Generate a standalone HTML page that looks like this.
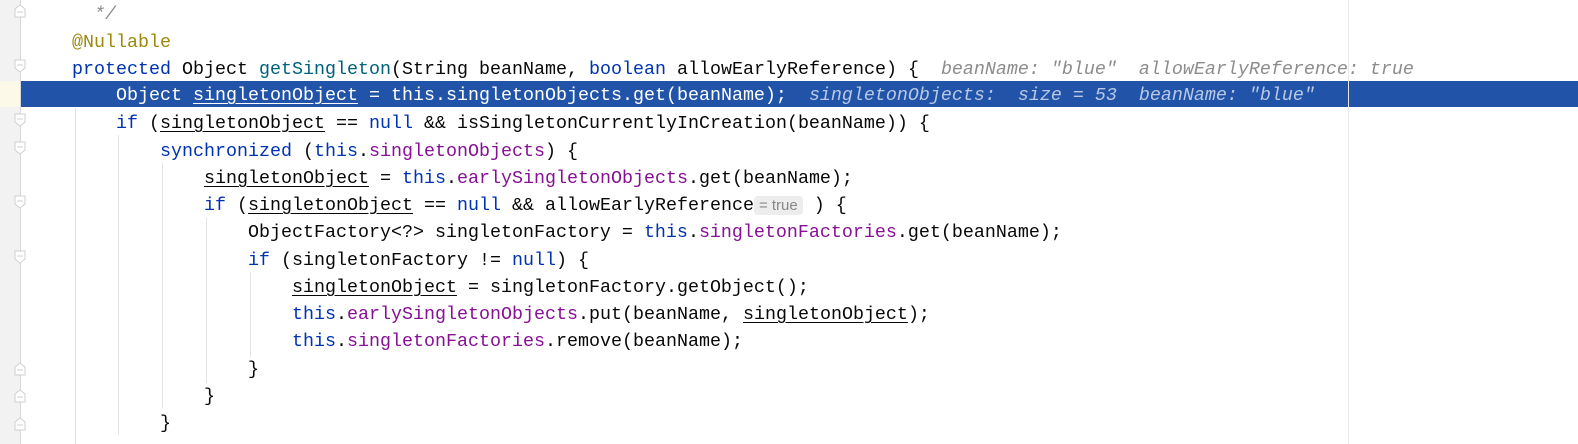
<!DOCTYPE html>
<html><head><meta charset="utf-8"><style>
body{margin:0;width:1578px;height:444px;overflow:hidden;background:#fff;position:relative;font-family:"Liberation Mono",monospace;font-size:18.33px;}
.gut{position:absolute;left:0;top:0;width:20px;height:444px;background:#f2f2f2;}
.gl{position:absolute;left:20px;top:0;width:1px;height:444px;background:#d8d8d8;}
.hl{position:absolute;left:21px;top:81px;width:1557px;height:26px;background:#2154a8;}
.hg{position:absolute;left:0;top:81px;width:20px;height:26px;background:#fdf9e8;}
.mr{position:absolute;left:1348px;top:0;width:1px;height:444px;background:#e8e8e8;}
.ig{position:absolute;width:1px;background:#e4e4e4;}
.ln{position:absolute;left:72px;height:27px;line-height:27px;white-space:pre;color:#080808;}
.k{color:#0033b3}.m{color:#00627a}.f{color:#871094}.a{color:#9e880d}.c{color:#8c8c8c;font-style:italic}
.u{text-decoration:underline;text-underline-offset:3px}
.h{color:#8c8c8c;font-style:italic}
.w,.w span{color:#fff}.w .h{color:#b8c8e6}
.ih{font-family:"Liberation Sans",sans-serif;font-size:15px;color:#888;background:#ededed;border-radius:4px;padding:1px 5px;font-style:normal}
svg{position:absolute;left:0;top:0}
</style></head><body>
<div class="gut"></div><div class="gl"></div>
<div class="hg"></div><div class="hl"></div>
<div class="mr"></div>
<div class="ig" style="left:75px;top:108px;height:336px"></div>
<div class="ig" style="left:118px;top:135px;height:300px"></div>
<div class="ig" style="left:162px;top:163px;height:245px"></div>
<div class="ig" style="left:206px;top:218px;height:165px"></div>
<div class="ig" style="left:250px;top:272px;height:85px"></div>
<svg width="40" height="444">
<g fill="#fff" stroke="#cfcfcf" stroke-width="1">
<path d="M15 17V9l5-4 5 4v8z"/><path d="M17 12h6"/>
<path d="M15 60v8l5 4 5-4v-8z"/><path d="M17 65h6"/>
<path d="M15 114v8l5 4 5-4v-8z"/><path d="M17 119h6"/>
<path d="M15 142v8l5 4 5-4v-8z"/><path d="M17 147h6"/>
<path d="M15 196v8l5 4 5-4v-8z"/><path d="M17 201h6"/>
<path d="M15 251v8l5 4 5-4v-8z"/><path d="M17 256h6"/>
<path d="M15 375v-8l5-4 5 4v8z"/><path d="M17 370h6"/>
<path d="M15 402v-8l5-4 5 4v8z"/><path d="M17 397h6"/>
<path d="M15 430v-8l5-4 5 4v8z"/><path d="M17 425h6"/>
</g></svg>
<div class="ln" style="top:1px"><span class="c">  */</span></div>
<div class="ln" style="top:29px"><span class="a">@Nullable</span></div>
<div class="ln" style="top:56px"><span class="k">protected</span> Object <span class="m">getSingleton</span>(String beanName, <span class="k">boolean</span> allowEarlyReference) {  <span class="h">beanName: "blue"  allowEarlyReference: true</span></div>
<div class="ln w" style="top:82px">    Object <span class="u">singletonObject</span> = this.singletonObjects.get(beanName);  <span class="h">singletonObjects:  size = 53  beanName: "blue"</span></div>
<div class="ln" style="top:110px">    <span class="k">if</span> (<span class="u">singletonObject</span> == <span class="k">null</span> &amp;&amp; isSingletonCurrentlyInCreation(beanName)) {</div>
<div class="ln" style="top:138px">        <span class="k">synchronized</span> (<span class="k">this</span>.<span class="f">singletonObjects</span>) {</div>
<div class="ln" style="top:165px">            <span class="u">singletonObject</span> = <span class="k">this</span>.<span class="f">earlySingletonObjects</span>.get(beanName);</div>
<div class="ln" style="top:192px">            <span class="k">if</span> (<span class="u">singletonObject</span> == <span class="k">null</span> &amp;&amp; allowEarlyReference<span class="ih">= true</span> ) {</div>
<div class="ln" style="top:219px">                ObjectFactory&lt;?&gt; singletonFactory = <span class="k">this</span>.<span class="f">singletonFactories</span>.get(beanName);</div>
<div class="ln" style="top:247px">                <span class="k">if</span> (singletonFactory != <span class="k">null</span>) {</div>
<div class="ln" style="top:274px">                    <span class="u">singletonObject</span> = singletonFactory.getObject();</div>
<div class="ln" style="top:301px">                    <span class="k">this</span>.<span class="f">earlySingletonObjects</span>.put(beanName, <span class="u">singletonObject</span>);</div>
<div class="ln" style="top:328px">                    <span class="k">this</span>.<span class="f">singletonFactories</span>.remove(beanName);</div>
<div class="ln" style="top:356px">                }</div>
<div class="ln" style="top:383px">            }</div>
<div class="ln" style="top:410px">        }</div>
</body></html>
